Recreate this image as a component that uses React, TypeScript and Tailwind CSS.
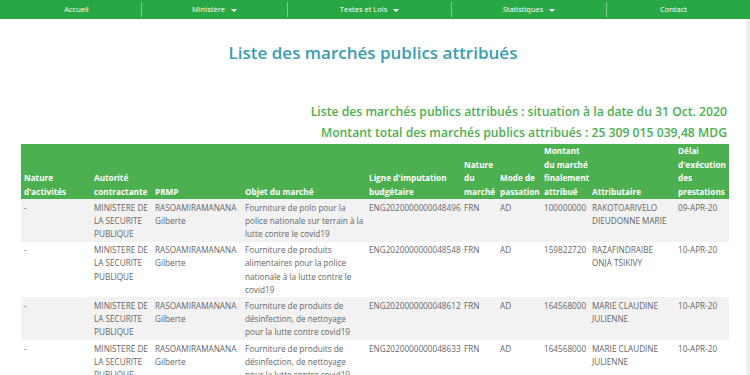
import React from "react";

type Row = {
  nature: string;
  autorite: string;
  prmp: string;
  objet: string;
  ligne: string;
  natureMarche: string;
  mode: string;
  montant: string;
  attributaire: string;
  delai: string;
};

const rows: Row[] = [
  {
    nature: "-",
    autorite: "MINISTERE DE LA SECURITE PUBLIQUE",
    prmp: "RASOAMIRAMANANA Gilberte",
    objet: "Fourniture de polo pour la police nationale sur terrain à la lutte contre le covid19",
    ligne: "ENG2020000000048496",
    natureMarche: "FRN",
    mode: "AD",
    montant: "100000000",
    attributaire: "RAKOTOARIVELO DIEUDONNE MARIE",
    delai: "09-APR-20",
  },
  {
    nature: "-",
    autorite: "MINISTERE DE LA SECURITE PUBLIQUE",
    prmp: "RASOAMIRAMANANA Gilberte",
    objet: "Fourniture de produits alimentaires pour la police nationale à la lutte contre le covid19",
    ligne: "ENG2020000000048548",
    natureMarche: "FRN",
    mode: "AD",
    montant: "159822720",
    attributaire: "RAZAFINDRAIBE ONJA TSIKIVY",
    delai: "10-APR-20",
  },
  {
    nature: "-",
    autorite: "MINISTERE DE LA SECURITE PUBLIQUE",
    prmp: "RASOAMIRAMANANA Gilberte",
    objet: "Fourniture de produits de désinfection, de nettoyage pour la lutte contre covid19",
    ligne: "ENG2020000000048612",
    natureMarche: "FRN",
    mode: "AD",
    montant: "164568000",
    attributaire: "MARIE CLAUDINE JULIENNE",
    delai: "10-APR-20",
  },
  {
    nature: "-",
    autorite: "MINISTERE DE LA SECURITE PUBLIQUE",
    prmp: "RASOAMIRAMANANA Gilberte",
    objet: "Fourniture de produits de désinfection, de nettoyage pour la lutte contre covid19",
    ligne: "ENG2020000000048633",
    natureMarche: "FRN",
    mode: "AD",
    montant: "164568000",
    attributaire: "MARIE CLAUDINE JULIENNE",
    delai: "10-APR-20",
  },
];

const headers = [
  "Nature d'activités",
  "Autorité contractante",
  "PRMP",
  "Objet du marché",
  "Ligne d'imputation budgétaire",
  "Nature du marché",
  "Mode de passation",
  "Montant du marché finalement attribué",
  "Attributaire",
  "Délai d'exécution des prestations",
];

const Caret = () => (
  <span className="inline-block ml-[6px] align-middle w-0 h-0 border-l-[3px] border-r-[3px] border-t-[3px] border-l-transparent border-r-transparent border-t-white" />
);

const App = () => {
  return (
    <div className="w-[750px] h-[375px] overflow-hidden bg-white font-['Open_Sans','Liberation_Sans',sans-serif]">
      {/* barre de navigation */}
      <nav className="h-[19px] bg-[#28a745] flex items-center text-white text-[7.5px]">
        <div className="w-[141px] pl-[12px] text-center leading-[15px]">Accueil</div>
        <div className="w-[146px] text-center border-l border-white/40 leading-[15px]">
          Ministère
          <Caret />
        </div>
        <div className="w-[164px] text-center border-l border-white/40 leading-[15px]">
          Textes et Lois
          <Caret />
        </div>
        <div className="w-[155px] text-center border-l border-white/40 leading-[15px]">
          Statistiques
          <Caret />
        </div>
        <div className="w-[142px] pr-[8px] text-center border-l border-white/40 leading-[15px]">Contact</div>
      </nav>

      <div className="flex">
        <main className="flex-1">
          <h1 className="text-center text-[17px] font-semibold text-[#3a9db0] mt-[22px] leading-[24px]">
            Liste des marchés publics attribués
          </h1>

          <div className="text-right text-[#4caf50] font-semibold text-[12.2px] leading-[21px] mt-[36px] pr-[19px]">
            <p>Liste des marchés publics attribués : situation à la date du 31 Oct. 2020</p>
            <p>Montant total des marchés publics attribués : 25 309 015 039,48 MDG</p>
          </div>

          {/* tableau des marchés */}
          <table className="ml-[21px] mt-[1px] w-[708px] table-fixed border-collapse text-[8.2px] leading-[13.2px]">
            <colgroup>
              <col className="w-[70px]" />
              <col className="w-[61px]" />
              <col className="w-[90px]" />
              <col className="w-[124px]" />
              <col className="w-[95px]" />
              <col className="w-[36px]" />
              <col className="w-[44px]" />
              <col className="w-[48px]" />
              <col className="w-[86px]" />
              <col className="w-[54px]" />
            </colgroup>
            <thead>
              <tr className="bg-[#4caf50] text-white font-bold text-left align-bottom h-[54px]">
                {headers.map((h) => (
                  <th key={h} className="pl-[3px] pr-0 pb-[1px] leading-[13.5px]">
                    {h}
                  </th>
                ))}
              </tr>
            </thead>
            <tbody className="text-[#666666]">
              {rows.map((r, i) => (
                <tr key={i} className={`align-top ${i % 2 === 0 ? "bg-[#f2f2f2]" : "bg-white"}`}>
                  <td className="pl-[3px] pt-[1.5px] pb-[1.5px]">{r.nature}</td>
                  <td className="pl-[3px] pt-[1.5px] pb-[1.5px]">{r.autorite}</td>
                  <td className="pl-[3px] pt-[1.5px] pb-[1.5px]">{r.prmp}</td>
                  <td className="pl-[3px] pt-[1.5px] pb-[1.5px]">{r.objet}</td>
                  <td className="pl-[3px] pt-[1.5px] pb-[1.5px]">{r.ligne}</td>
                  <td className="pl-[3px] pt-[1.5px] pb-[1.5px]">{r.natureMarche}</td>
                  <td className="pl-[3px] pt-[1.5px] pb-[1.5px]">{r.mode}</td>
                  <td className="pl-[3px] pt-[1.5px] pb-[1.5px]">{r.montant}</td>
                  <td className="pl-[3px] pt-[1.5px] pb-[1.5px]">{r.attributaire}</td>
                  <td className="pl-[3px] pt-[1.5px] pb-[1.5px]">{r.delai}</td>
                </tr>
              ))}
            </tbody>
          </table>
        </main>
        <div className="w-[4px] bg-[#eeeeee] h-[356px]" />
      </div>
    </div>
  );
};

export default App;
